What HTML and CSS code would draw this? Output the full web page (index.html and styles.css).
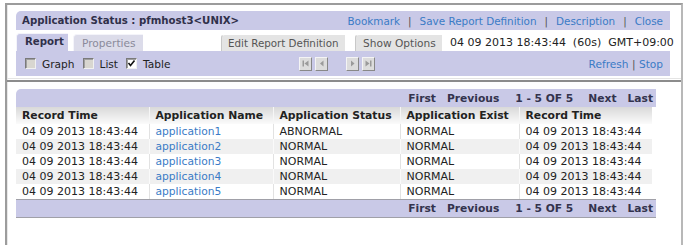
FILE: index.html
```html
<!DOCTYPE html>
<html>
<head>
<meta charset="utf-8">
<link rel="stylesheet" href="styles.css">
</head>
<body>
<div class="win">
  <div class="top">
    <div class="titlebar">
      <span class="title">Application Status : pfmhost3&lt;UNIX&gt;</span>
      <span class="links"><a>Bookmark</a><i>|</i><a>Save Report Definition</a><i>|</i><a>Description</a><i>|</i><a>Close</a></span>
    </div>
    <div class="tabs">
      <span class="tab active">Report</span>
      <span class="tab dim">Properties</span>
      <span class="spacer"></span>
      <span class="tab gray edit">Edit Report Definition</span>
      <span class="tab gray show">Show Options</span>
      <span class="stamp">04 09 2013 18:43:44 &nbsp;(60s) &nbsp;GMT+09:00</span>
    </div>
    <div class="toolbar">
      <span class="checks">
        <span class="cb"></span><span class="lbl">Graph</span>
        <span class="cb"></span><span class="lbl">List</span>
        <span class="cb on"><svg width="9" height="9" viewBox="0 0 9 9"><path d="M1.5 4 L3.5 6.5 L7.5 1.5" fill="none" stroke="#111" stroke-width="1.6"/></svg></span><span class="lbl">Table</span>
      </span>
      <span class="navbtns">
        <span class="nb"><svg width="11" height="11" viewBox="0 0 11 11"><rect x="2.5" y="2.5" width="1.5" height="6" fill="#9a9a9a"/><path d="M8.5 2.5 L4.5 5.5 L8.5 8.5 Z" fill="#9a9a9a"/></svg></span>
        <span class="nb"><svg width="11" height="11" viewBox="0 0 11 11"><path d="M7.5 2.5 L4 5.5 L7.5 8.5 Z" fill="#9a9a9a"/></svg></span>
        <span class="gapb"></span>
        <span class="nb"><svg width="11" height="11" viewBox="0 0 11 11"><path d="M4 2.5 L7.5 5.5 L4 8.5 Z" fill="#9a9a9a"/></svg></span>
        <span class="nb"><svg width="11" height="11" viewBox="0 0 11 11"><path d="M2.5 2.5 L6.5 5.5 L2.5 8.5 Z" fill="#9a9a9a"/><rect x="7" y="2.5" width="1.5" height="6" fill="#9a9a9a"/></svg></span>
      </span>
      <span class="rlinks"><a>Refresh</a> <i>|</i> <a>Stop</a></span>
    </div>
  </div>
  <div class="sep"></div>
  <div class="bottom">
    <div class="pager"><b>First</b><b>Previous</b><b class="cnt">1 - 5 OF 5</b><b>Next</b><b>Last</b></div>
    <table class="grid">
      <thead>
        <tr><th class="c1">Record Time</th><th class="c2">Application Name</th><th class="c3">Application Status</th><th class="c4">Application Exist</th><th class="c5">Record Time</th></tr>
      </thead>
      <tbody>
        <tr><td>04 09 2013 18:43:44</td><td><a>application1</a></td><td>ABNORMAL</td><td>NORMAL</td><td>04 09 2013 18:43:44</td></tr>
        <tr><td>04 09 2013 18:43:44</td><td><a>application2</a></td><td>NORMAL</td><td>NORMAL</td><td>04 09 2013 18:43:44</td></tr>
        <tr><td>04 09 2013 18:43:44</td><td><a>application3</a></td><td>NORMAL</td><td>NORMAL</td><td>04 09 2013 18:43:44</td></tr>
        <tr><td>04 09 2013 18:43:44</td><td><a>application4</a></td><td>NORMAL</td><td>NORMAL</td><td>04 09 2013 18:43:44</td></tr>
        <tr><td>04 09 2013 18:43:44</td><td><a>application5</a></td><td>NORMAL</td><td>NORMAL</td><td>04 09 2013 18:43:44</td></tr>
      </tbody>
    </table>
    <div class="pager foot"><b>First</b><b>Previous</b><b class="cnt">1 - 5 OF 5</b><b>Next</b><b>Last</b></div>
  </div>
</div>
</body>
</html>
```
FILE: styles.css
```css
* { box-sizing: border-box; }
html, body { margin: 0; padding: 0; background: #fff; }
body {
  font-family: "DejaVu Sans", Verdana, sans-serif;
  font-size: 10.6px;
  color: #222;
  width: 685px;
  height: 245px;
  overflow: hidden;
}
a { color: #3a7bc6; text-decoration: none; }
i { font-style: normal; }

.win {
  margin: 3px 0 0 5px;
  width: 678px;
  height: 242px;
  border-top: 2px solid #9c9c9c;
  border-left: 2px solid #9c9c9c;
  border-right: 2px solid #b8b8b8;
  box-shadow: inset 1px 0 0 #e8e8e8;
  display: flex;
  flex-direction: column;
}

.top {
  height: 73px;
  padding: 6px 0 0 9px;
}
.titlebar {
  width: 654px;
  height: 19px;
  background: #c9c9e7;
  border-radius: 5px 0 0 0;
  display: flex;
  align-items: center;
  justify-content: space-between;
  padding: 0 7px 0 6px;
}
.title { font-weight: bold; color: #30304a; font-size: 10.2px; }
.links { font-size: 10.4px; }
.links i { color: #555; margin: 0 8px; }

.tabs {
  margin-top: 3px;
  height: 18px;
  display: flex;
  align-items: flex-end;
  white-space: nowrap;
}
.tab {
  height: 17px;
  line-height: 16px;
  padding: 0 0 0 6px;
  border-radius: 4px 0 0 0;
  border-top: 1px solid #f4f4fa;
  border-left: 1px solid #f4f4fa;
  margin-right: 5px;
  overflow: hidden;
}
.tab.active { background: #c9c9e7; font-weight: bold; font-size: 10.2px; color: #30304a; width: 52px; height: 18px; padding-left: 8px; }
.tab.dim { background: #dcdcea; color: #8a8a9a; width: 70px; padding-left: 8px; }
.tab.gray { background: #e4e4e4; color: #555; border-top-color: #fff; border-left-color: #c8c8c8; }
.tab.edit { width: 124px; font-size: 10.3px; padding-left: 6px; margin-right: 10px; }
.tab.show { width: 87px; padding-left: 7px; }
.spacer { flex: 0 0 73px; }
.stamp { margin-left: 3px; font-size: 11px; color: #222; line-height: 17px; height: 17px; }

.toolbar {
  width: 654px;
  height: 25px;
  background: #c9c9e7;
  display: flex;
  align-items: center;
  padding: 0 7px 0 9px;
}
.checks { display: flex; align-items: center; width: 274px; }
.cb {
  width: 11px;
  height: 11px;
  background: #d8d6d0;
  border: 1px solid;
  border-color: #7a7a7a #f0f0f0 #f0f0f0 #7a7a7a;
  box-shadow: inset 1px 1px 0 #a0a0a0;
  display: inline-flex;
  align-items: center;
  justify-content: center;
}
.cb.on { background: #fff; }
.lbl { margin: 0 8px 0 6px; }
.navbtns { display: flex; align-items: center; }
.nb {
  width: 13px;
  height: 14px;
  background: #dcdcdc;
  border: 1px solid;
  border-color: #f4f4f4 #888 #888 #f4f4f4;
  margin-right: 3px;
  display: inline-flex;
  align-items: center;
  justify-content: center;
}
.gapb { width: 15px; }
.rlinks { margin-left: auto; }
.rlinks i { color: #555; }

.sep {
  height: 4px;
  border-top: 1px solid #e4e4e4;
  border-bottom: 2px solid #8c8c8c;
}

.bottom {
  flex: 1;
  padding: 7px 0 0 9px;
}
.pager {
  width: 640px;
  height: 18px;
  background: #c9c9e7;
  border-radius: 5px 0 0 0;
  display: flex;
  justify-content: flex-end;
  align-items: center;
  padding-right: 3px;
  color: #33334d;
  font-size: 10.7px;
}
.pager b { margin-left: 11px; }
.pager b.cnt { margin-left: 16px; margin-right: 4px; }
.pager.foot {
  border-radius: 0;
  border-top: 1px solid #a0a0a8;
  border-bottom: 1px solid #a0a0a8;
  height: 19px;
}

.grid {
  border-collapse: collapse;
  width: 636px;
  table-layout: fixed;
  font-size: 11px;
}
.grid th, .grid td {
  padding: 0 4px 0 6px;
  text-align: left;
  white-space: nowrap;
  overflow: hidden;
  border-left: 1px solid #e2e2e2;
}
.grid th:first-child, .grid td:first-child { border-left: 0; }
.grid th {
  height: 17px;
  font-weight: bold;
  font-size: 10.8px;
  background: linear-gradient(#d9d9d9, #fbfbfb);
  border-left-color: #f6f6f6;
}
.grid td { height: 15px; line-height: 14px; }
.grid td a { font-size: 10.7px; }
.grid tbody tr:nth-child(even) td { background: #f0f0f0; border-left-color: #fafafa; }
.c1 { width: 133px; }
.c2 { width: 124px; }
.c3 { width: 127px; }
.c4 { width: 119px; }
.c5 { width: 133px; }
```
